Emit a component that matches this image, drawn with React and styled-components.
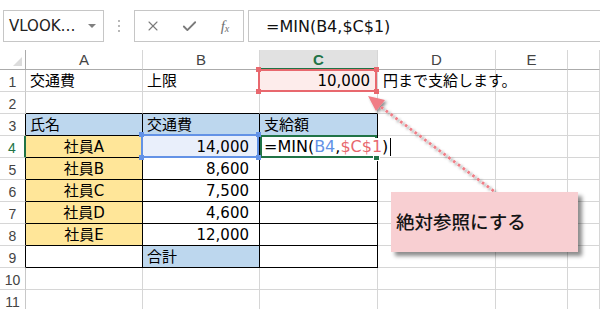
import React from 'react';
import styled, { createGlobalStyle } from 'styled-components';
import { X, Check } from 'lucide-react';

const GREEN = '#217346';
const BLUE = '#6392e6';
const RED = '#e8686e';
const GRID = '#d6d6d6';
const HEAD_LINE = '#ababab';

const Global = createGlobalStyle`
  html, body { margin: 0; padding: 0; background: #fff; }
  body { font-family: "DejaVu Sans", "Noto Sans CJK JP", sans-serif; }
`;

const Page = styled.div`
  position: relative;
  width: 600px;
  height: 309px;
  overflow: hidden;
  background: #fff;
  display: flex;
  flex-direction: column;
`;

const FormulaBar = styled.div`
  display: flex;
  align-items: stretch;
  height: 32px;
  padding: 10px 0 8px 3px;
  flex-shrink: 0;
`;

const NameBox = styled.div`
  width: 101px;
  box-sizing: border-box;
  border: 1px solid #c6c6c6;
  display: flex;
  align-items: center;
  justify-content: space-between;
  padding: 0 7px 0 5px;
  font-size: 15px;
  color: #222;
`;

const Caret = styled.span`
  width: 0;
  height: 0;
  border-left: 4px solid transparent;
  border-right: 4px solid transparent;
  border-top: 4px solid #808080;
`;

const Grip = styled.div`
  width: 30px;
  display: flex;
  flex-direction: column;
  align-items: center;
  justify-content: center;
  gap: 3px;
`;

const GripDot = styled.span`
  width: 2px;
  height: 2px;
  background: #b8b8b8;
`;

const ButtonBox = styled.div`
  width: 110px;
  box-sizing: border-box;
  border: 1px solid #c6c6c6;
  display: grid;
  grid-template-columns: repeat(3, 36px);
  align-items: center;
  justify-items: center;
  color: #7a7a7a;
  margin-right: 4px;
`;

const Fx = styled.span`
  font-family: "Liberation Serif", serif;
  font-style: italic;
  font-size: 15px;
  color: #707070;
  & sub {
    font-size: 10px;
    vertical-align: -1px;
  }
`;

const FormulaInput = styled.div`
  flex: 1;
  border: 1px solid #c6c6c6;
  border-right: none;
  display: flex;
  align-items: center;
  padding-left: 17px;
  font-size: 16px;
  color: #111;
`;

const Sheet = styled.div`
  position: relative;
  flex: 1;
  display: grid;
  grid-template-columns: 26px 117px 117px 118px 118px 72px 1fr;
  grid-template-rows: 20px repeat(11, 22px);
`;

const Corner = styled.div`
  position: relative;
  box-sizing: border-box;
  border-right: 1px solid ${HEAD_LINE};
  border-bottom: 1px solid ${HEAD_LINE};
  &::after {
    content: '';
    position: absolute;
    right: 3px;
    bottom: 3px;
    width: 0;
    height: 0;
    border-left: 9px solid transparent;
    border-bottom: 9px solid #dcdcdc;
  }
`;

const ColHead = styled.div`
  box-sizing: border-box;
  display: flex;
  align-items: center;
  justify-content: center;
  font-family: "Liberation Sans", sans-serif;
  font-size: 15px;
  color: ${p => (p.$active ? GREEN : '#444')};
  font-weight: ${p => (p.$active ? 700 : 400)};
  background: ${p => (p.$active ? '#e1e1e1' : '#fff')};
  border-right: 1px solid ${GRID};
  border-bottom: ${p => (p.$active ? `2px solid ${GREEN}` : `1px solid ${HEAD_LINE}`)};
`;

const RowHead = styled.div`
  box-sizing: border-box;
  display: flex;
  align-items: center;
  justify-content: center;
  font-family: "Liberation Sans", sans-serif;
  font-size: 14px;
  color: ${p => (p.$active ? GREEN : '#444')};
  border-right: ${p => (p.$active ? `2px solid ${GREEN}` : `1px solid ${p.$edge}`)};
  border-bottom: 1px solid ${GRID};
  padding-top: 2px;
`;

const Cell = styled.div`
  position: relative;
  box-sizing: border-box;
  display: flex;
  align-items: center;
  justify-content: ${p => (p.$align === 'right' ? 'flex-end' : p.$align === 'center' ? 'center' : 'flex-start')};
  padding: 1px ${p => p.$pr || 4}px 0 ${p => p.$pl || 4}px;
  white-space: nowrap;
  font-size: 15px;
  line-height: 1;
  color: #000;
  background: ${p => p.$fill || 'transparent'};
  border-right: 1px solid ${p => p.$rb};
  border-bottom: 1px solid ${p => p.$bb};
`;

const RangeBox = styled.div`
  position: absolute;
  top: ${p => p.$t}px;
  left: ${p => p.$l}px;
  right: ${p => p.$r}px;
  bottom: ${p => p.$b}px;
  border: 2px solid ${p => p.$color};
  z-index: ${p => p.$z};
  pointer-events: none;
`;

const Handle = styled.span`
  position: absolute;
  width: 5px;
  height: 5px;
  background: ${p => p.$color};
  ${p => (p.$v === 'top' ? 'top: -4px;' : 'bottom: -4px;')}
  ${p => (p.$h === 'left' ? 'left: -4px;' : 'right: -4px;')}
  ${p => (p.$outlined ? 'outline: 1px solid #fff;' : '')}
`;

const EditText = styled.span`
  position: relative;
  z-index: 5;
  align-self: stretch;
  margin: 1px 0;
  background: #fff;
  font-size: 16px;
  display: inline-flex;
  align-items: center;
`;

const Ref = styled.span`
  color: ${p => p.$color};
`;

const TextCursor = styled.span`
  display: inline-block;
  width: 1px;
  height: 18px;
  background: #000;
  margin-left: 2px;
`;

const Callout = styled.div`
  position: absolute;
  left: 391px;
  top: 192px;
  width: 187px;
  height: 60px;
  background: #f8cfd2;
  box-shadow: 4px 4px 4px rgba(0, 0, 0, 0.45);
  display: flex;
  align-items: center;
  padding-left: 5px;
  padding-bottom: 3px;
  box-sizing: border-box;
  font-family: "Noto Sans CJK JP", sans-serif;
  font-size: 18.5px;
  font-weight: 500;
  color: #141414;
  z-index: 6;
`;

const ArrowLayer = styled.svg`
  position: absolute;
  left: 0;
  top: 0;
  z-index: 5;
  pointer-events: none;
`;

const COLS = ['A', 'B', 'C', 'D', 'E', 'F'];

const BLUE_FILL = '#bdd7ee';
const YELLOW = '#ffe699';

const data = {
  1: {
    A: { t: '交通費' },
    B: { t: '上限' },
    C: { t: '10,000', align: 'right', pr: 7, fill: '#fdeceb', range: 'red' },
    D: { t: '円まで支給します。', pl: 5 },
  },
  3: {
    A: { t: '氏名', fill: BLUE_FILL },
    B: { t: '交通費', fill: BLUE_FILL },
    C: { t: '支給額', fill: BLUE_FILL },
  },
  4: {
    A: { t: '社員A', fill: YELLOW, align: 'center' },
    B: { t: '14,000', align: 'right', pr: 10, fill: '#e9effb', range: 'blue' },
    C: { formula: true, pl: 4 },
  },
  5: { A: { t: '社員B', fill: YELLOW, align: 'center' }, B: { t: '8,600', align: 'right', pr: 10 } },
  6: { A: { t: '社員C', fill: YELLOW, align: 'center' }, B: { t: '7,500', align: 'right', pr: 10 } },
  7: { A: { t: '社員D', fill: YELLOW, align: 'center' }, B: { t: '4,600', align: 'right', pr: 10 } },
  8: { A: { t: '社員E', fill: YELLOW, align: 'center' }, B: { t: '12,000', align: 'right', pr: 10 } },
  9: { B: { t: '合計', fill: BLUE_FILL } },
};

const inTable = (r, c) => r >= 3 && r <= 9 && c >= 1 && c <= 3;

function Corners({ color, outlined }) {
  return (
    <>
      <Handle $v="top" $h="left" $color={color} $outlined={outlined} />
      <Handle $v="top" $h="right" $color={color} $outlined={outlined} />
      <Handle $v="bottom" $h="left" $color={color} $outlined={outlined} />
      <Handle $v="bottom" $h="right" $color={color} $outlined={outlined} />
    </>
  );
}

function CellContent({ r, c }) {
  const col = COLS[c - 1];
  const d = (data[r] && data[r][col]) || {};
  const rb = inTable(r, c) || inTable(r, c + 1) ? '#000' : GRID;
  const bb = inTable(r, c) || inTable(r + 1, c) ? '#000' : GRID;
  return (
    <Cell $rb={rb} $bb={bb} $fill={d.fill} $align={d.align} $pr={d.pr} $pl={d.pl}>
      {d.formula ? (
        <EditText>
          =MIN(<Ref $color={BLUE}>B4</Ref>,<Ref $color={RED}>$C$1</Ref>)
          <TextCursor />
        </EditText>
      ) : (
        d.t
      )}
      {d.range === 'red' && (
        <RangeBox $color={RED} $t={-1} $l={-2} $r={0} $b={-1} $z={3}>
          <Corners color={RED} />
        </RangeBox>
      )}
      {d.range === 'blue' && (
        <RangeBox $color={BLUE} $t={-2} $l={-2} $r={0} $b={-1} $z={4}>
          <Corners color={BLUE} />
        </RangeBox>
      )}
      {d.formula && (
        <RangeBox $color={GREEN} $t={-1} $l={0} $r={0} $b={-1} $z={3}>
          <Handle $v="bottom" $h="right" $color={GREEN} $outlined />
        </RangeBox>
      )}
    </Cell>
  );
}

export default function App() {
  const rows = Array.from({ length: 11 }, (_, i) => i + 1);
  return (
    <Page>
      <Global />
      <FormulaBar>
        <NameBox>
          <span>VLOOK…</span>
          <Caret />
        </NameBox>
        <Grip>
          <GripDot />
          <GripDot />
          <GripDot />
        </Grip>
        <ButtonBox>
          <X size={16} strokeWidth={1.6} />
          <Check size={17} strokeWidth={2.6} />
          <Fx>
            f<sub>x</sub>
          </Fx>
        </ButtonBox>
        <FormulaInput>=MIN(B4,$C$1)</FormulaInput>
      </FormulaBar>
      <Sheet>
        <Corner />
        {COLS.map(c => (
          <ColHead key={c} $active={c === 'C'}>
            {c === 'F' ? '' : c}
          </ColHead>
        ))}
        {rows.map(r => (
          <React.Fragment key={r}>
            <RowHead $active={r === 4} $edge={r >= 3 && r <= 9 ? '#000' : '#c8c8c8'}>
              {r}
            </RowHead>
            {COLS.map((_, i) => (
              <CellContent key={i} r={r} c={i + 1} />
            ))}
          </React.Fragment>
        ))}
      </Sheet>
      <ArrowLayer width="600" height="309" viewBox="0 0 600 309">
        <defs>
          <filter id="sh" x="-20%" y="-20%" width="140%" height="140%">
            <feDropShadow dx="2" dy="2" stdDeviation="1.5" floodColor="#000" floodOpacity="0.45" />
          </filter>
        </defs>
        <g filter="url(#sh)">
          <line
            x1="381"
            y1="107"
            x2="495"
            y2="192"
            stroke="#f07d86"
            strokeWidth="2.8"
            strokeDasharray="2.6 3.4"
          />
          <polygon points="368,96 385,100 376,111" fill="#f07d86" />
        </g>
      </ArrowLayer>
      <Callout>絶対参照にする</Callout>
    </Page>
  );
}
